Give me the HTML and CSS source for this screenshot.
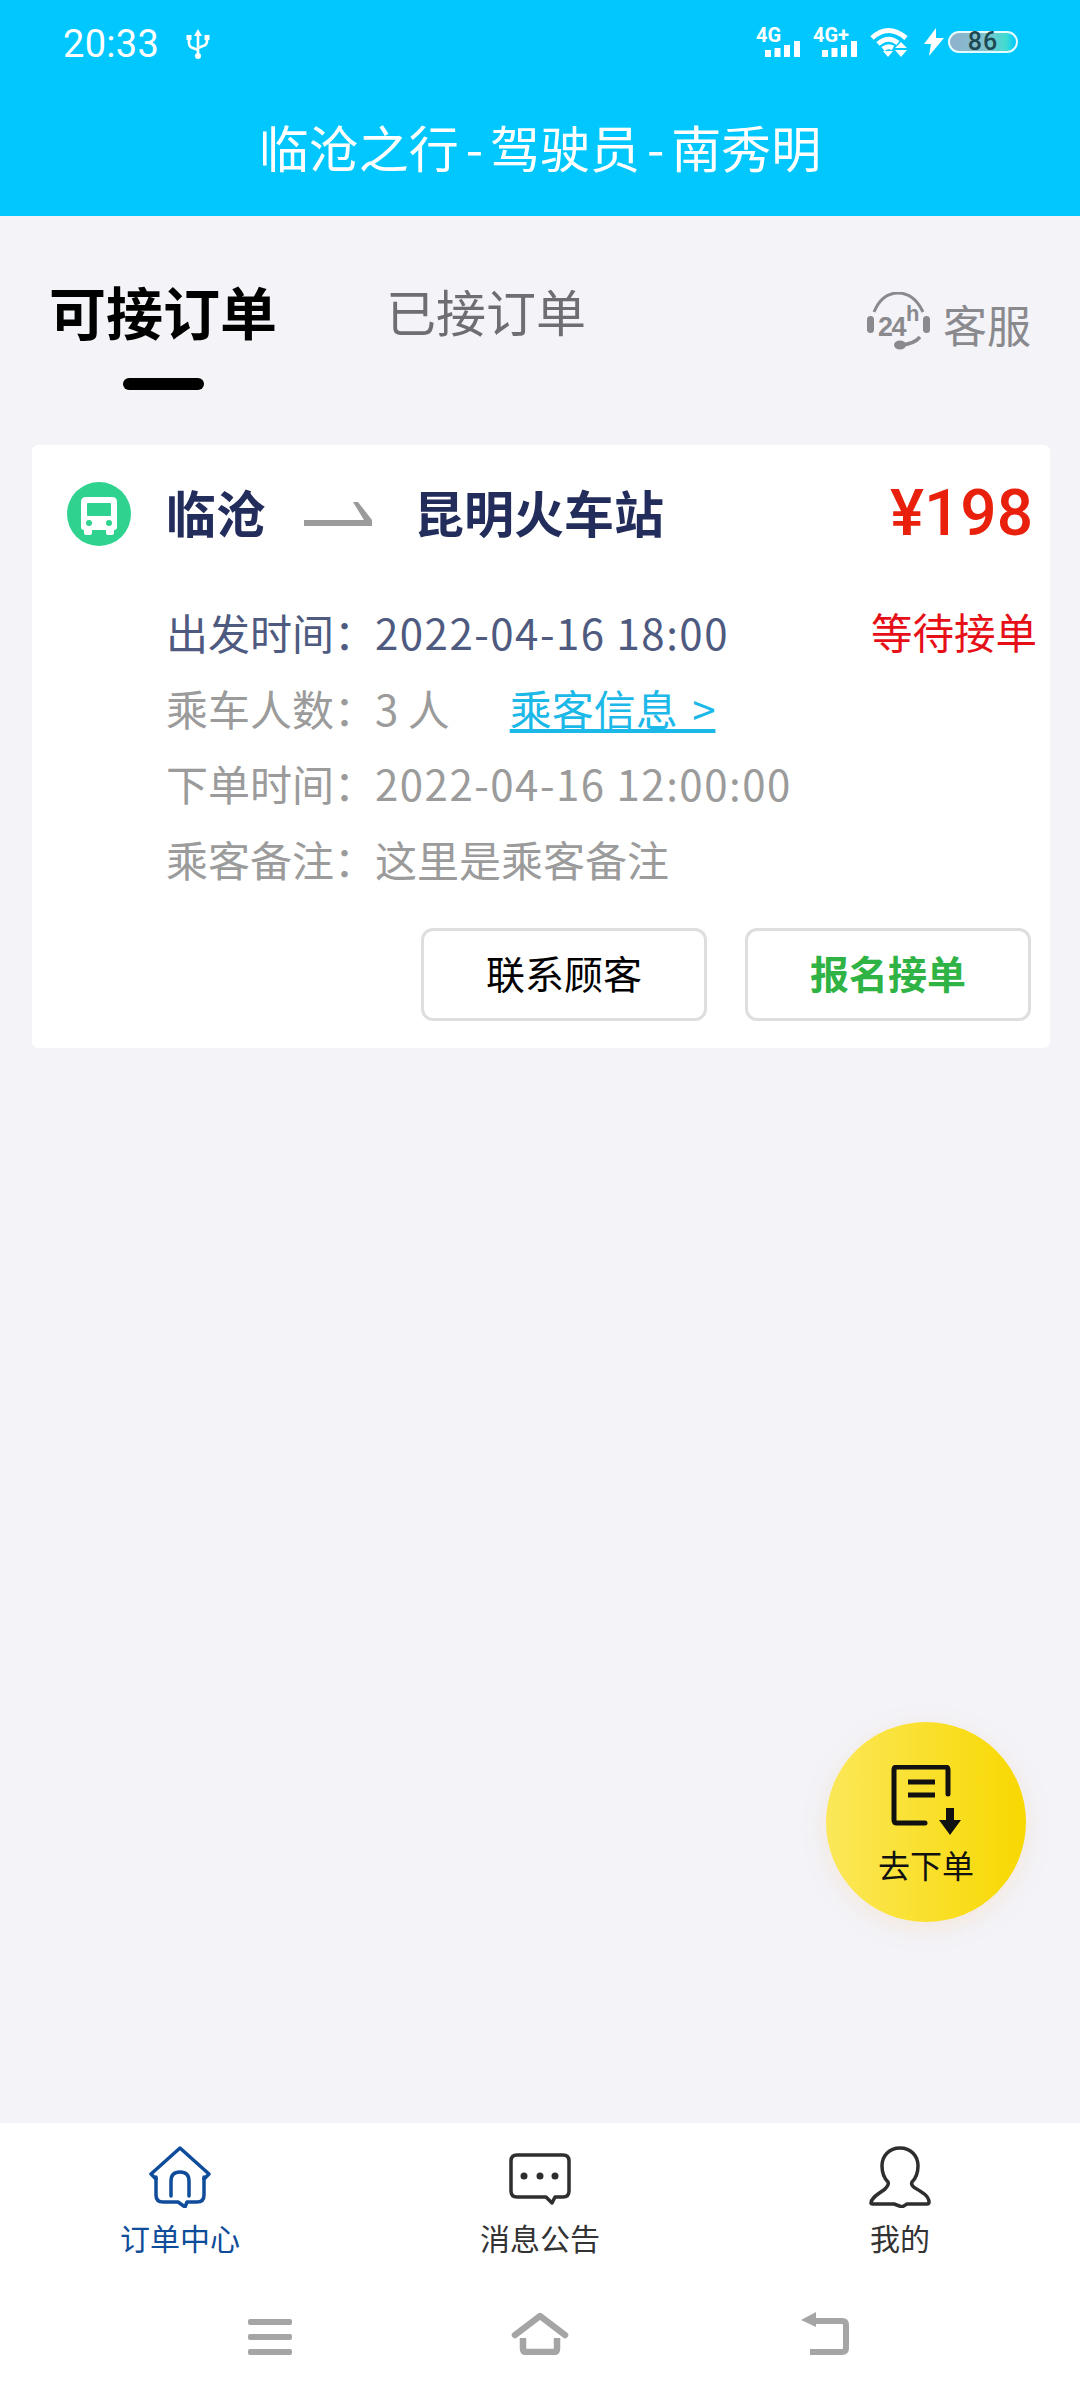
FILE: index.html
```html
<!DOCTYPE html>
<html lang="zh">
<head>
<meta charset="utf-8">
<title>临沧之行</title>
<link rel="stylesheet" href="styles.css">
</head>
<body>
<div class="app">
  <header class="header">
    <div class="status">
      <span class="time">20:33</span>
      <svg class="usb" viewBox="0 0 24 30"><path d="M12 0l4 7H8z" fill="#fff"/><path d="M12 5v22M3 9v5q0 4 4 5l5 2M21 9v3q0 4-4 5l-5 2" fill="none" stroke="#fff" stroke-width="2.6"/><circle cx="12" cy="27" r="3" fill="#fff"/><rect x="0.5" y="6" width="5" height="5" fill="#fff"/><rect x="18.5" y="6" width="5" height="5" fill="#fff"/></svg>
      <div class="status-icons">
        <svg class="sig" viewBox="0 0 44 30"><text x="0" y="15" class="sig-text">4G</text><path d="M9 23h6v7H9zM18.500 21h6v9h-6zM28 18h6v12h-6zM38 14h6v16h-6z" fill="#fff"/></svg>
        <svg class="sig" viewBox="0 0 44 30"><text x="0" y="15" class="sig-text">4G+</text><path d="M9 23h6v7H9zM18.500 21h6v9h-6zM28 18h6v12h-6zM38 14h6v16h-6z" fill="#fff"/></svg>
        <svg class="wifi" viewBox="0 0 38 30"><path d="M2 11Q18-4 36 11M8 17Q18 8 28 16M13 22Q18 18 23 21" fill="none" stroke="#fff" stroke-width="5"/><path d="M13 24h10l-5 6z" fill="#fff"/><path d="M31 15l6 6H25zM25 23h12l-6 7z" fill="#fff"/></svg>
        <svg class="bolt" viewBox="0 0 20 28"><path d="M12 0L0 16h7L5 28 20 10h-8z" fill="#fff"/></svg>
        <div class="battery"><span class="battery-num">86</span></div>
      </div>
    </div>
    <h1 class="title">临沧之行<span class="dash">-</span>驾驶员<span class="dash">-</span>南秀明</h1>
  </header>

  <nav class="tabs">
    <div class="tab tab-active">可接订单<i class="tab-bar"></i></div>
    <div class="tab tab-idle">已接订单</div>
    <div class="service">
      <svg class="headset" viewBox="0 0 63 58"><path d="M7 20Q15 1 31 1T56 20" fill="none" stroke="#8a8a8e" stroke-width="3"/><rect x="0" y="24" width="7" height="17" rx="3.500" fill="#8a8a8e"/><rect x="56" y="24" width="7" height="17" rx="3.500" fill="#8a8a8e"/><text x="11" y="44" class="hs-24">24</text><text x="39" y="29" class="hs-h">h</text><path d="M34 53Q47 52 53 45" fill="none" stroke="#8a8a8e" stroke-width="3.500"/><ellipse cx="33" cy="53" rx="6" ry="4.500" fill="#8a8a8e"/></svg>
      <span class="service-text">客服</span>
    </div>
  </nav>

  <section class="card">
    <div class="route">
      <svg class="bus" viewBox="0 0 64 64"><circle cx="32" cy="32" r="32" fill="#2fd38f"/><path d="M19 15h26q5 0 5 5v25q0 3-3 3v3q0 2-2 2h-4q-2 0-2-2v-3H25v3q0 2-2 2h-4q-2 0-2-2v-3q-3 0-3-3V20q0-5 5-5z" fill="#fff"/><rect x="20" y="21" width="24" height="13" rx="1" fill="#2fd38f"/><circle cx="22" cy="41" r="3" fill="#2fd38f"/><circle cx="42" cy="41" r="3" fill="#2fd38f"/></svg>
      <span class="city">临沧</span>
      <svg class="arrow" viewBox="0 0 68 24"><path d="M0 18H60L49 0H54L68 18V24H0Z" fill="#9b9b9b"/></svg>
      <span class="city">昆明火车站</span>
      <span class="price">¥198</span>
    </div>
    <div class="rows">
      <div class="row row-dark"><span class="key">出发时间：</span><span class="val num">2022-04-16 18:00</span><span class="state">等待接单</span></div>
      <div class="row"><span class="key">乘车人数：</span><span class="val">3 人</span><a class="link">乘客信息 &gt;</a></div>
      <div class="row"><span class="key">下单时间：</span><span class="val num">2022-04-16 12:00:00</span></div>
      <div class="row"><span class="key">乘客备注：</span><span class="val">这里是乘客备注</span></div>
    </div>
    <div class="actions">
      <button class="btn">联系顾客</button>
      <button class="btn btn-go">报名接单</button>
    </div>
  </section>

  <div class="spacer"></div>

  <footer class="tabbar">
    <div class="tabitem tabitem-on">
      <svg class="tabicon" viewBox="0 0 62 62"><g fill="none" stroke="#0f4c99" stroke-width="3.500" stroke-linejoin="round" stroke-linecap="round"><path d="M7 33L2 28 31 2 60 28 55 33"/><path d="M7 31V49Q7 56 14 56H29L36 61 38 56H48Q55 56 55 49V31"/><path d="M22 50V35Q22 26 31 26T40 35V50"/></g></svg>
      <span class="tablabel">订单中心</span>
    </div>
    <div class="tabitem">
      <svg class="tabicon" viewBox="0 0 62 62"><path d="M8 9H54Q60 9 60 15V45Q60 51 54 51H46L43 57 37 51H8Q2 51 2 45V15Q2 9 8 9Z" fill="none" stroke="#2e2e2e" stroke-width="3.500" stroke-linejoin="round"/><circle cx="15" cy="30" r="3.500" fill="#2e2e2e"/><circle cx="31" cy="30" r="3.500" fill="#2e2e2e"/><circle cx="46" cy="30" r="3.500" fill="#2e2e2e"/></svg>
      <span class="tablabel">消息公告</span>
    </div>
    <div class="tabitem">
      <svg class="tabicon" viewBox="0 0 62 62"><path d="M31 2C20 2 13 10 13 20 13 28 16 33 19 36 20 38 19 40 16 43 8 49 2 52 2 57 2 58 2 58 4 58H25L33 61 38 58H58Q60 58 60 56C60 50 53 46 46 42 43 40 42 38 43 36 46 33 49 28 49 20 49 10 42 2 31 2Z" fill="none" stroke="#2e2e2e" stroke-width="3.500" stroke-linejoin="round"/></svg>
      <span class="tablabel">我的</span>
    </div>
  </footer>

  <div class="sysnav">
    <svg class="nav-menu" viewBox="0 0 44 43"><rect y="7" width="44" height="6" rx="2" fill="#a5a5a5"/><rect y="22" width="44" height="6" rx="2" fill="#a5a5a5"/><rect y="37" width="44" height="6" rx="2" fill="#a5a5a5"/></svg>
    <svg class="nav-home" viewBox="0 0 58 43"><g fill="none" stroke="#a5a5a5" stroke-width="6.500"><path d="M4 23L29 4 54 23" stroke-linecap="round" stroke-linejoin="round"/><path d="M12 26V36Q12 40 15 40H43Q46 40 46 36V26"/></g></svg>
    <svg class="nav-back" viewBox="0 0 48 43"><path d="M15 0V15L0 8Z" fill="#a5a5a5"/><path d="M10 9H41Q45 9 45 13V36Q45 40 41 40H9" fill="none" stroke="#a5a5a5" stroke-width="6"/></svg>
  </div>

  <button class="fab">
    <svg class="fab-icon" viewBox="0 0 70 70"><g fill="none" stroke="#111" stroke-width="5" stroke-linecap="round" stroke-linejoin="round"><path d="M57 29V5Q57 2 54 2H6Q3 2 3 5V55Q3 58 6 58H34"/><path d="M17 17H44M17 30H44" stroke-linecap="butt"/></g><path d="M55 43H63V55H70L59 70 48 55H55Z" fill="#111"/></svg>
    <span class="fab-text">去下单</span>
  </button>
</div>
</body>
</html>
```
FILE: styles.css
```css
* { box-sizing: border-box; }
html, body { margin: 0; padding: 0; }
body { font-family: "Noto Sans CJK SC", "Noto Sans", sans-serif; background: #f3f3f8; }
.app { position: relative; width: 1080px; height: 2400px; display: flex; flex-direction: column; overflow: hidden; }

.header { height: 216px; background: #00c8ff; color: #fff; }
.status { height: 87px; display: flex; align-items: center; padding: 0 62px 0 63px; }
.time { font-family: Roboto, sans-serif; font-size: 38px; line-height: 40px; letter-spacing: .3px; }
.usb { width: 24px; height: 30px; margin-left: 27px; }
.status-icons { margin-left: auto; margin-bottom: 3px; display: flex; align-items: center; }
.sig { width: 44px; height: 30px; margin-right: 13px; overflow: visible; }
.sig-text { font-family: Roboto, sans-serif; font-weight: 700; font-size: 20px; fill: #fff; }
.wifi { width: 38px; height: 30px; margin-right: 16px; }
.bolt { width: 20px; height: 28px; margin-right: 4px; }
.battery { width: 70px; height: 22px; border: 2px solid #e6fbff; border-radius: 11px; background: linear-gradient(90deg, #8fb0cc, #7fc4cf 55%, #3fdcd0 85%, #00c8ff); display: flex; align-items: center; justify-content: center; }
.battery-num { font-family: Roboto, sans-serif; font-size: 25px; font-weight: 500; line-height: 20px; color: #1d4a52; letter-spacing: 1px; }
.title { margin: 0; height: 118px; font-size: 50px; font-weight: 400; line-height: 118px; text-align: center; }
.dash { margin: 0 7px; }

.tabs { height: 229px; display: flex; align-items: flex-start; padding: 59px 49px 0 49px; }
.tab { line-height: 70px; display: flex; flex-direction: column; align-items: center; }
.tab-active { font-size: 57px; font-weight: 700; color: #000; margin-right: 109px; }
.tab-bar { display: block; width: 81px; height: 12px; margin-top: 33px; border-radius: 6px; background: #000; }
.tab-idle { font-size: 50px; color: #6d6d72; }
.service { margin-left: auto; margin-top: 17px; display: flex; align-items: flex-start; gap: 13px; }
.headset { width: 63px; height: 58px; }
.hs-24 { font-family: "Liberation Sans", sans-serif; font-weight: 700; font-size: 27px; letter-spacing: -1.5px; fill: #8a8a8e; }
.hs-h { font-family: "Liberation Sans", sans-serif; font-weight: 700; font-size: 22px; fill: #8a8a8e; }
.service-text { margin-top: 3px; font-size: 44px; line-height: 58px; color: #8a8a8e; }

.card { margin: 0 30px 0 32px; padding: 37px 14px 27px 0; background: #fff; border-radius: 6px; }
.route { display: flex; align-items: center; height: 64px; padding-left: 35px; padding-right: 3px; }
.bus { width: 64px; height: 64px; margin-right: 35px; }
.city { font-size: 50px; font-weight: 700; color: #232d5c; line-height: 58px; height: 64px; white-space: nowrap; }
.arrow { width: 68px; height: 24px; margin: 0 42px 0 38px; }
.price { margin-left: auto; font-family: Roboto, sans-serif; font-size: 64px; font-weight: 500; line-height: 66px; color: #e8200c; }

.rows { margin-top: 48px; padding-left: 134px; }
.row { display: flex; height: 75.5px; line-height: 75.5px; font-size: 42px; color: #9b9b9b; white-space: nowrap; }
.row-dark { color: #4f5a80; }
.key { width: 209px; }
.num { letter-spacing: 1.5px; }
.state { margin-left: auto; margin-right: -1px; color: #e60f17; font-size: 41.5px; }
.link { margin-left: 60px; color: #1cb8e8; word-spacing: 5px; text-decoration: underline; text-underline-offset: 3px; text-decoration-thickness: 4px; }

.actions { margin-top: 32px; display: flex; justify-content: flex-end; gap: 38px; padding-right: 5px; }
.btn { width: 286px; height: 93px; padding: 0 0 5px; background: #fff; border: 3px solid #dedede; border-radius: 12px; font-family: inherit; font-size: 39px; color: #000; }
.btn-go { color: #2fb344; font-weight: 700; }

.spacer { flex: 1; }

.tabbar { height: 167px; padding-top: 23px; background: #fff; display: grid; grid-template-columns: repeat(3, 360px); }
.tabitem { display: flex; flex-direction: column; align-items: center; color: #333; }
.tabitem-on { color: #0f4c99; }
.tabicon { width: 62px; height: 62px; }
.tablabel { margin-top: 9px; font-size: 30px; line-height: 40px; }

.sysnav { height: 110px; padding: 22px 0 0 248px; background: #fff; display: flex; align-items: flex-start; }
.nav-menu { width: 44px; height: 43px; margin-right: 219px; }
.nav-home { width: 58px; height: 43px; margin-right: 232px; }
.nav-back { width: 48px; height: 43px; }

.fab { position: absolute; left: 826px; top: 1722px; width: 200px; height: 200px; padding: 43px 0 0; border: 0; border-radius: 50%; background: linear-gradient(90deg, #fbe85a, #f8d800); box-shadow: 0 6px 24px rgba(255, 190, 120, .22); display: flex; flex-direction: column; align-items: center; font-family: inherit; }
.fab-icon { width: 70px; height: 70px; }
.fab-text { margin-top: 9px; font-size: 32px; line-height: 40px; color: #111; }
```
